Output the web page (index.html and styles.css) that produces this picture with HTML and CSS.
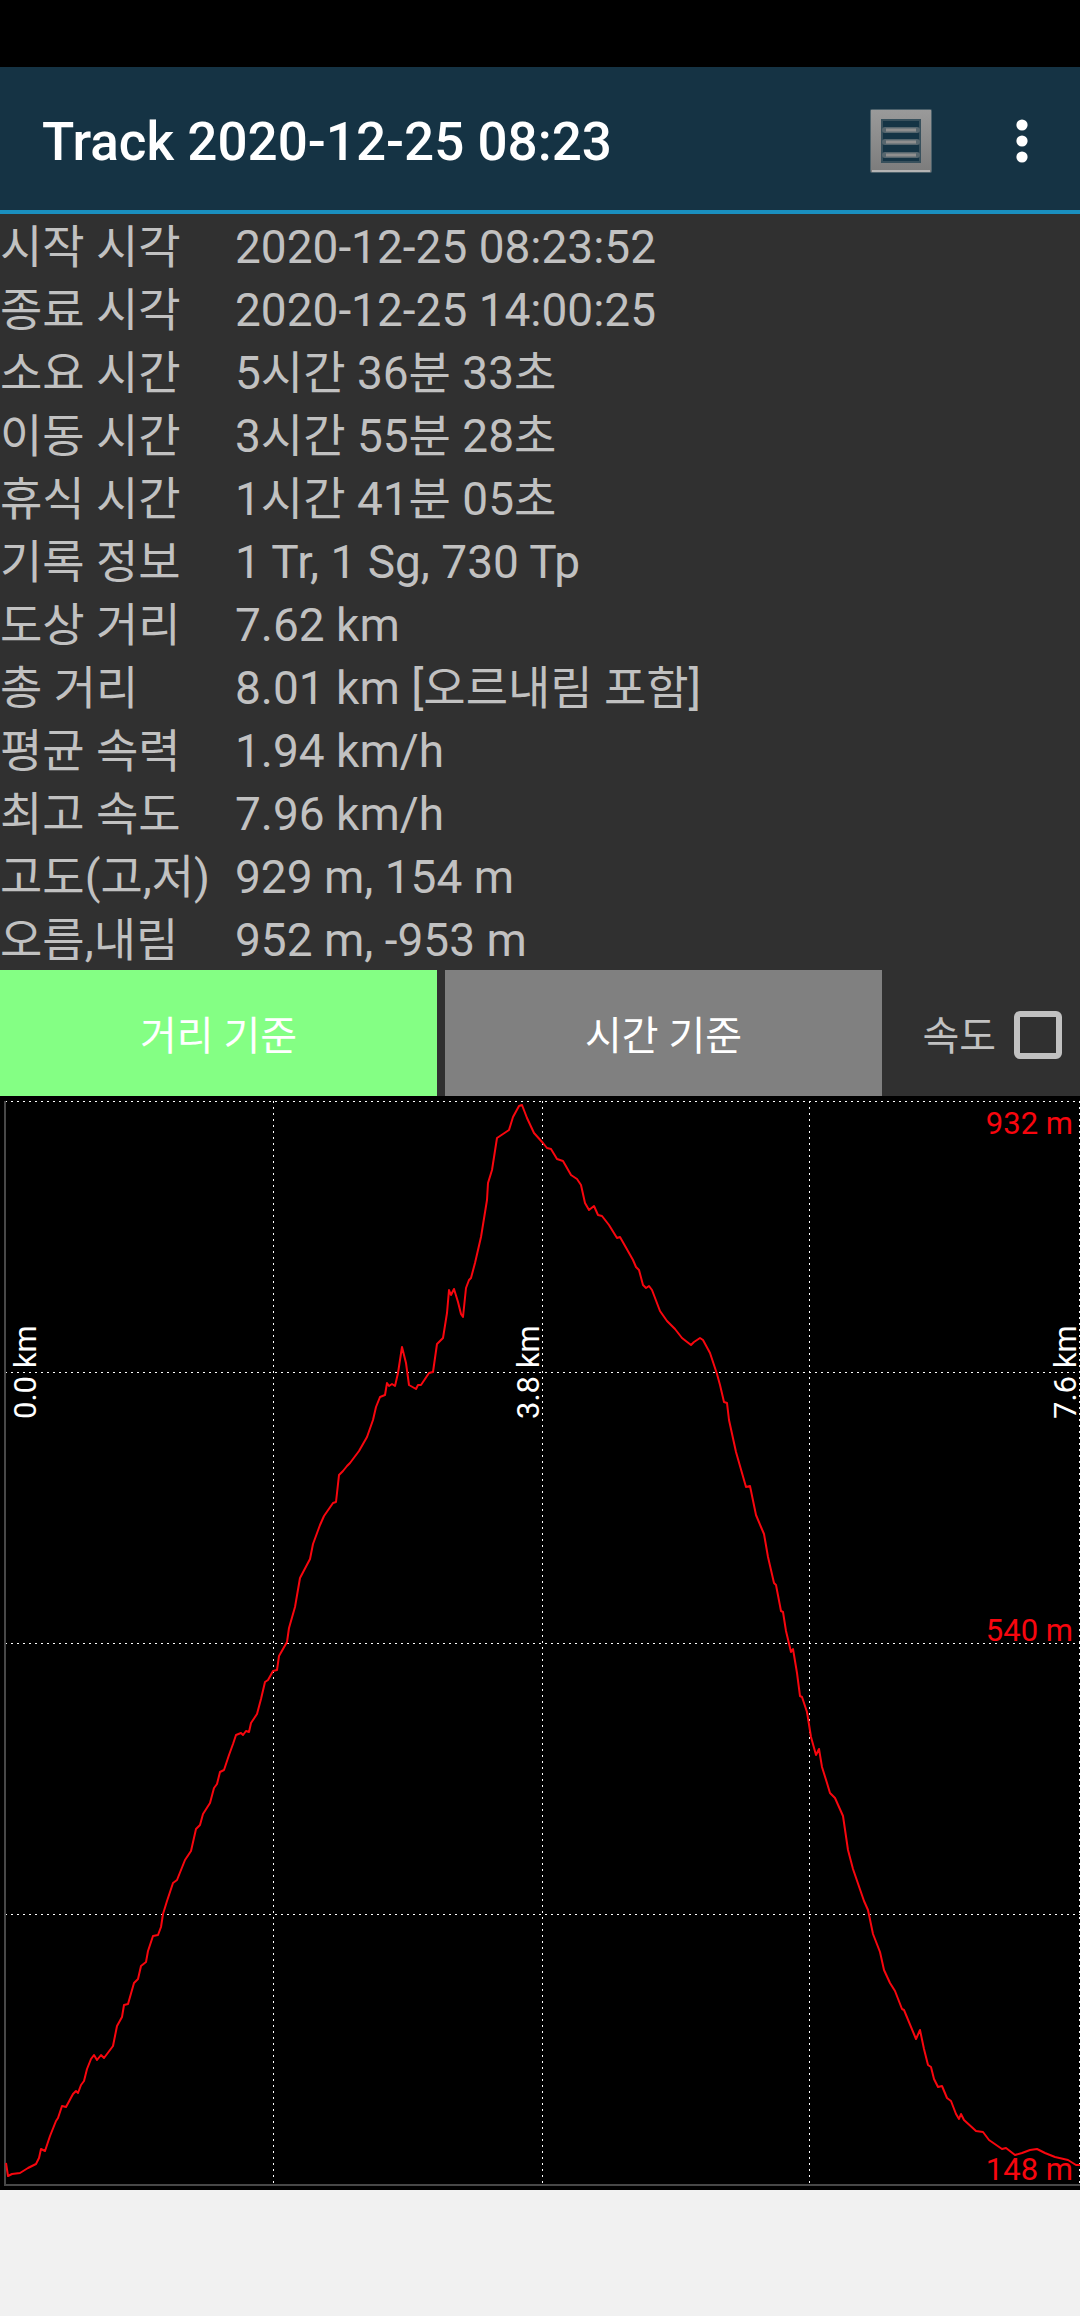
FILE: index.html
```html
<!DOCTYPE html>
<html lang="ko">
<head>
  <meta charset="UTF-8" />
  <meta name="viewport" content="width=device-width, initial-scale=1.0" />
  <title>Track 2020-12-25 08:23</title>
  <link rel="stylesheet" href="styles.css">
</head>
<body>

  <div class="status-bar"></div>

  <header class="action-bar">
    <h1>Track 2020-12-25 08:23</h1>
    <button class="icon-btn" type="button" aria-label="목록">
      <svg width="66" height="68" viewBox="0 0 66 68">
        <defs>
          <linearGradient id="frame" x1="0" y1="0" x2="0" y2="1">
            <stop offset="0" stop-color="#9a9a9a" />
            <stop offset="1" stop-color="#7c7c7c" />
          </linearGradient>
        </defs>
        <rect x="2" y="2" width="62" height="64" rx="2" fill="#4d626c" />
        <path d="M3 3H63V65H3Z M14 13V55H52V13Z" fill="url(#frame)" fill-rule="evenodd" />
        <path d="M4 64H62" stroke="#b4b4b4" stroke-width="2" />
        <rect x="14" y="13" width="38" height="42" fill="#153445" stroke="#38505c" stroke-width="2" />
        <path d="M17 23H49M17 35H49M17 48H49" stroke="#56666e" stroke-width="6" stroke-linecap="round" />
        <path d="M18 23H48M18 35H48M18 48H48" stroke="#8f8f8f" stroke-width="3" />
      </svg>
    </button>
    <button class="icon-btn more-btn" type="button" aria-label="더보기">
      <svg width="12" height="44" viewBox="0 0 12 44" fill="#fff">
        <circle cx="6" cy="6" r="5.6" />
        <circle cx="6" cy="22" r="5.6" />
        <circle cx="6" cy="38" r="5.6" />
      </svg>
    </button>
  </header>

  <main>
    <table class="track-info">
      <tr><th scope="row">시작 시각</th><td>2020-12-25 08:23:52</td></tr>
      <tr><th scope="row">종료 시각</th><td>2020-12-25 14:00:25</td></tr>
      <tr><th scope="row">소요 시간</th><td>5시간 36분 33초</td></tr>
      <tr><th scope="row">이동 시간</th><td>3시간 55분 28초</td></tr>
      <tr><th scope="row">휴식 시간</th><td>1시간 41분 05초</td></tr>
      <tr><th scope="row">기록 정보</th><td>1 Tr, 1 Sg, 730 Tp</td></tr>
      <tr><th scope="row">도상 거리</th><td>7.62 km</td></tr>
      <tr><th scope="row">총 거리</th><td>8.01 km [오르내림 포함]</td></tr>
      <tr><th scope="row">평균 속력</th><td>1.94 km/h</td></tr>
      <tr><th scope="row">최고 속도</th><td>7.96 km/h</td></tr>
      <tr><th scope="row">고도(고,저)</th><td>929 m, 154 m</td></tr>
      <tr><th scope="row">오름,내림</th><td>952 m, -953 m</td></tr>
    </table>

    <div class="controls">
      <button class="mode-btn active" type="button">거리 기준</button>
      <button class="mode-btn" type="button">시간 기준</button>
      <div class="speed">
        <label for="speed">속도</label>
        <input type="checkbox" id="speed" />
      </div>
    </div>

    <!-- Elevation profile -->
    <svg class="chart" viewBox="0 0 1080 1094" role="img" aria-label="고도 그래프">
      <g class="grid">
        <path d="M5 5.5H1080M5 276.5H1080M5 547.5H1080M5 818.5H1080" />
        <path d="M273.5 5V1088M542.5 5V1088M809.5 5V1088M1079.5 5V1088" />
      </g>
      <path class="axis" d="M5 5V1089H1080" />
      <polyline class="profile" points="
        6,1067 8,1080 12,1078 20,1077 28,1072 36,1068 39,1062 41,1053 45,1055 50,1040
        56,1025 58,1022 62,1010 66,1011 73,998 76,995 78,997 81,989 84,985 87,973
        91,963 94,959 97,964 101,959 104,962 107,958 113,950 117,930 122,921 124,909
        128,908 134,887 138,883 141,870 146,866 148,855 153,840 158,839 161,831 163,818
        167,805 173,787 177,784 185,764 191,755 196,733 200,729 203,718 210,707 214,692
        217,688 220,676 224,674 229,659 233,648 236,639 241,637 243,639 246,635 249,636
        251,627 257,618 261,603 265,586 268,584 273,575 277,574 279,560 287,546 289,532
        295,511 300,482 310,463 313,448 320,429 324,420 333,407 336,406 339,379 343,375
        347,370 350,367 359,355 367,341 373,324 376,311 380,301 385,299 387,287 389,290
        392,288 395,290 398,277 402,251 406,267 409,289 416,293 418,289 421,289 429,277
        433,276 437,248 443,242 447,217 449,194 451,199 454,193 458,206 461,218 463,221
        466,192 469,184 471,182 475,167 481,141 487,104 488,87 492,74 497,42 503,38
        509,34 513,21 519,10 522,9 527,22 534,37 543,47 547,52 551,53 557,63
        563,65 571,79 577,83 581,89 585,107 589,114 594,110 598,119 602,120 609,129
        617,142 620,141 633,164 636,171 639,174 643,189 646,192 649,190 652,194 660,215
        667,225 675,233 682,242 691,249 694,246 700,242 703,244 710,257 717,278 720,289
        724,306 727,307 729,324 736,356 746,391 750,390 756,419 761,431 764,438 768,461
        774,487 776,489 781,515 783,516 786,535 791,556 793,553 797,577 800,600 802,601
        807,616 811,641 816,659 819,653 822,671 827,687 830,697 835,702 843,720 848,754
        853,773 864,805 868,814 873,838 880,856 884,874 890,887 895,895 902,913 904,914
        916,943 920,934 924,953 928,969 931,971 934,983 938,991 942,990 947,1002 951,1005
        956,1018 959,1023 961,1018 964,1024 976,1035 983,1036 989,1044 1002,1053 1006,1052 1015,1059
        1022,1057 1030,1054 1037,1053 1045,1057 1055,1061 1068,1064 1076,1069 1080,1069" />
      <g class="elevation">
        <text x="1073" y="38">932 m</text>
        <text x="1073" y="545">540 m</text>
        <text x="1073" y="1084">148 m</text>
      </g>
      <g class="distance">
        <text transform="translate(36 323) rotate(-90)">0.0 km</text>
        <text transform="translate(539 323) rotate(-90)">3.8 km</text>
        <text transform="translate(1076 323) rotate(-90)">7.6 km</text>
      </g>
    </svg>
  </main>

</body>
</html>
```
FILE: styles.css
```css
* {
  box-sizing: border-box;
}
body {
  margin: 0;
  background-color: #f1f1f1;
  color: #c1c1c1;
  font-family: Roboto, "Noto Sans CJK KR", sans-serif;
}
button {
  border: none;
  padding: 0;
  font-family: inherit;
  cursor: pointer;
}
.status-bar {
  height: 67px;
  background-color: #000;
}

/* Action bar */
.action-bar {
  display: flex;
  align-items: center;
  height: 147px;
  padding: 4px 52px 0 42px;
  background-color: #153344;
  border-bottom: 4px solid #1a8fbf;
}
.action-bar h1 {
  flex: 1;
  margin: 0;
  padding-top: 2px;
  font-size: 53px;
  font-weight: 500;
  line-height: 64px;
  color: #fff;
}
.icon-btn {
  display: flex;
  background: none;
}
.more-btn {
  margin-left: 82px;
}

/* Track details */
main {
  background-color: #303030;
}
.track-info {
  width: 100%;
  border-collapse: collapse;
  table-layout: fixed;
  font-size: 46px;
  line-height: 59px;
}
.track-info th,
.track-info td {
  height: 63px;
  padding: 4px 0 0;
  font-weight: 400;
  text-align: left;
  white-space: nowrap;
}
.track-info th {
  width: 235px;
}

/* Buttons over the chart */
.controls {
  display: flex;
  gap: 8px;
  height: 126px;
  font-size: 40px;
}
.mode-btn {
  flex: 1;
  background-color: #808080;
  color: #fff;
  font-size: 40px;
}
.mode-btn.active {
  background-color: #84ff84;
}
.speed {
  display: flex;
  align-items: center;
  justify-content: flex-end;
  gap: 18px;
  width: 190px;
  padding-right: 18px;
}
.speed input {
  appearance: none;
  width: 48px;
  height: 48px;
  margin: 4px 0 0;
  border: 6px solid #c1c1c1;
  border-radius: 6px;
}
.speed input:checked {
  background-color: #1a8fbf;
}

/* Chart */
.chart {
  display: block;
  width: 100%;
  background-color: #000;
  font-size: 31px;
}
.grid path {
  fill: none;
  stroke: #fff;
  stroke-width: 1;
  stroke-dasharray: 2 4;
}
.axis {
  fill: none;
  stroke: #484848;
  stroke-width: 2;
}
.profile {
  fill: none;
  stroke: #f8060e;
  stroke-width: 2;
  stroke-linejoin: round;
}
.elevation text {
  fill: #f8060e;
  text-anchor: end;
}
.distance text {
  fill: #fff;
}
```
